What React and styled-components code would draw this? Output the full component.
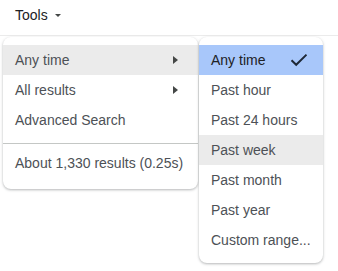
import * as React from "react";
import styled, { createGlobalStyle } from "styled-components";

const GlobalStyle = createGlobalStyle`
  body {
    margin: 0;
    background: #ffffff;
    font-family: "Liberation Sans", Arial, sans-serif;
  }
`;

const Page = styled.div`
  position: relative;
  width: 338px;
  height: 271px;
  overflow: hidden;
`;

const Toolbar = styled.div`
  height: 36px;
  border-bottom: 1px solid #ebebeb;
  display: flex;
  align-items: center;
  padding-left: 15px;
  box-sizing: border-box;
`;

const ToolsButton = styled.div`
  display: flex;
  align-items: center;
  gap: 7px;
  font-size: 14px;
  color: #202124;
  margin-top: -6px;
`;

const Caret = styled.span`
  width: 0;
  height: 0;
  border-left: 3px solid transparent;
  border-right: 3px solid transparent;
  border-top: 3px solid #444746;
  margin-top: 2px;
`;

// dropdown panels hang over the page below the toolbar
const Menu = styled.div`
  position: absolute;
  top: 37px;
  left: ${(p) => p.left}px;
  width: ${(p) => p.width}px;
  background: #ffffff;
  border-radius: 8px;
  box-shadow: 0 1px 3px rgba(60, 64, 67, 0.28), 0 1px 2px rgba(60, 64, 67, 0.12);
  padding: 8px 0;
  overflow: hidden;
`;

const Item = styled.div`
  height: 30px;
  display: flex;
  align-items: center;
  justify-content: space-between;
  padding: 0 13px 0 12px;
  font-size: 14px;
  white-space: nowrap;
  background: ${(p) => (p.selected ? "#a8c7fa" : p.hover ? "#ebebeb" : "transparent")};
  color: ${(p) => (p.selected ? "#202124" : "#4d5156")};
`;

const Arrow = styled.span`
  width: 0;
  height: 0;
  border-top: 4px solid transparent;
  border-bottom: 4px solid transparent;
  border-left: 5px solid #444746;
  margin-right: 7px;
`;

const Divider = styled.div`
  height: 1px;
  background: #c4c7c5;
  margin-top: 8px;
`;

const Summary = styled.div`
  height: 37px;
  display: flex;
  align-items: center;
  padding: 0 12px;
  font-size: 14px;
  color: #4d5156;
  white-space: nowrap;
`;

const Check = () => (
  <svg width="18" height="14" viewBox="0 0 18 14" style={{ marginRight: 2 }}>
    <path d="M1.5 7.2 L6.2 11.8 L16.5 1.6" fill="none" stroke="#1f2937" strokeWidth="2" />
  </svg>
);

const times = ["Past hour", "Past 24 hours", "Past week", "Past month", "Past year", "Custom range..."];

export default function App() {
  return (
    <Page>
      <GlobalStyle />
      <Toolbar>
        <ToolsButton>
          Tools <Caret />
        </ToolsButton>
      </Toolbar>

      <Menu left={3} width={195}>
        <Item hover>
          Any time <Arrow />
        </Item>
        <Item>
          All results <Arrow />
        </Item>
        <Item>Advanced Search</Item>
        <Divider />
        <Summary>About 1,330 results (0.25s)</Summary>
      </Menu>

      <Menu left={199} width={124}>
        <Item selected>
          Any time <Check />
        </Item>
        {times.map((t) => (
          <Item key={t} hover={t === "Past week"}>
            {t}
          </Item>
        ))}
      </Menu>
    </Page>
  );
}
